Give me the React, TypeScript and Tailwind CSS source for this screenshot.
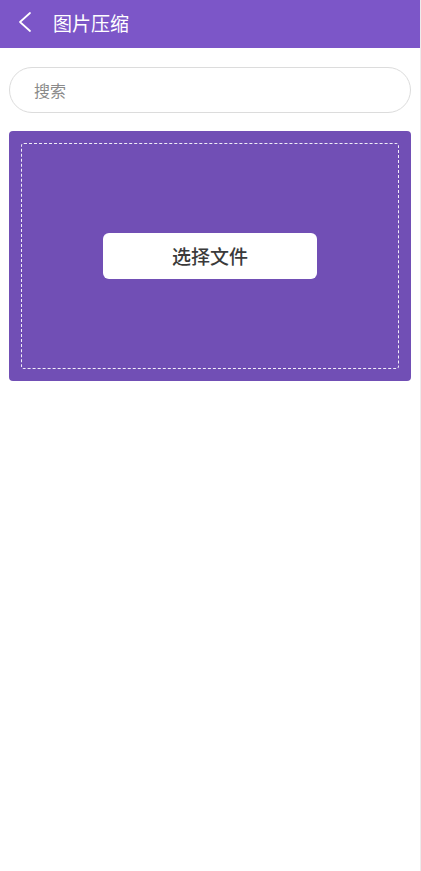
const FONT = { fontFamily: '"Noto Sans CJK SC", "Noto Sans", sans-serif' };

function BackIcon() {
  return (
    <svg width="14" height="20" viewBox="0 0 14 20" fill="none" stroke="currentColor" strokeWidth="1.7" strokeLinecap="round" strokeLinejoin="round" aria-hidden="true">
      <polyline points="12 1 2 10 12 19" />
    </svg>
  );
}

export default function App() {
  return (
    <div className="min-h-[871px] w-[421px] bg-white flex" style={FONT}>
      <div className="w-[420px] flex flex-col">
        <header className="h-12 bg-[#7c56c8] flex items-center pl-[18px] pb-[4px] gap-[21px] text-white">
          <BackIcon />
          <span className="text-[19px] leading-none">图片压缩</span>
        </header>

        <div className="px-[9px] pt-[19px] flex flex-col gap-[18px]">
          <div className="h-[46px] rounded-full border border-[#dcdcdc] flex items-center px-6">
            <span className="text-[16px] text-[#8a8a8a]">搜索</span>
          </div>

          <div className="h-[250px] bg-[#714fb5] rounded-[4px] p-3">
            <div className="h-full border border-dashed border-white/90 rounded-[3px] flex items-center justify-center">
              <button className="w-[214px] h-[46px] bg-white rounded-[6px] text-[19px] font-medium text-[#3a3a3a]">
                选择文件
              </button>
            </div>
          </div>
        </div>
      </div>
      <div className="w-px bg-[#ececec]" />
    </div>
  );
}
